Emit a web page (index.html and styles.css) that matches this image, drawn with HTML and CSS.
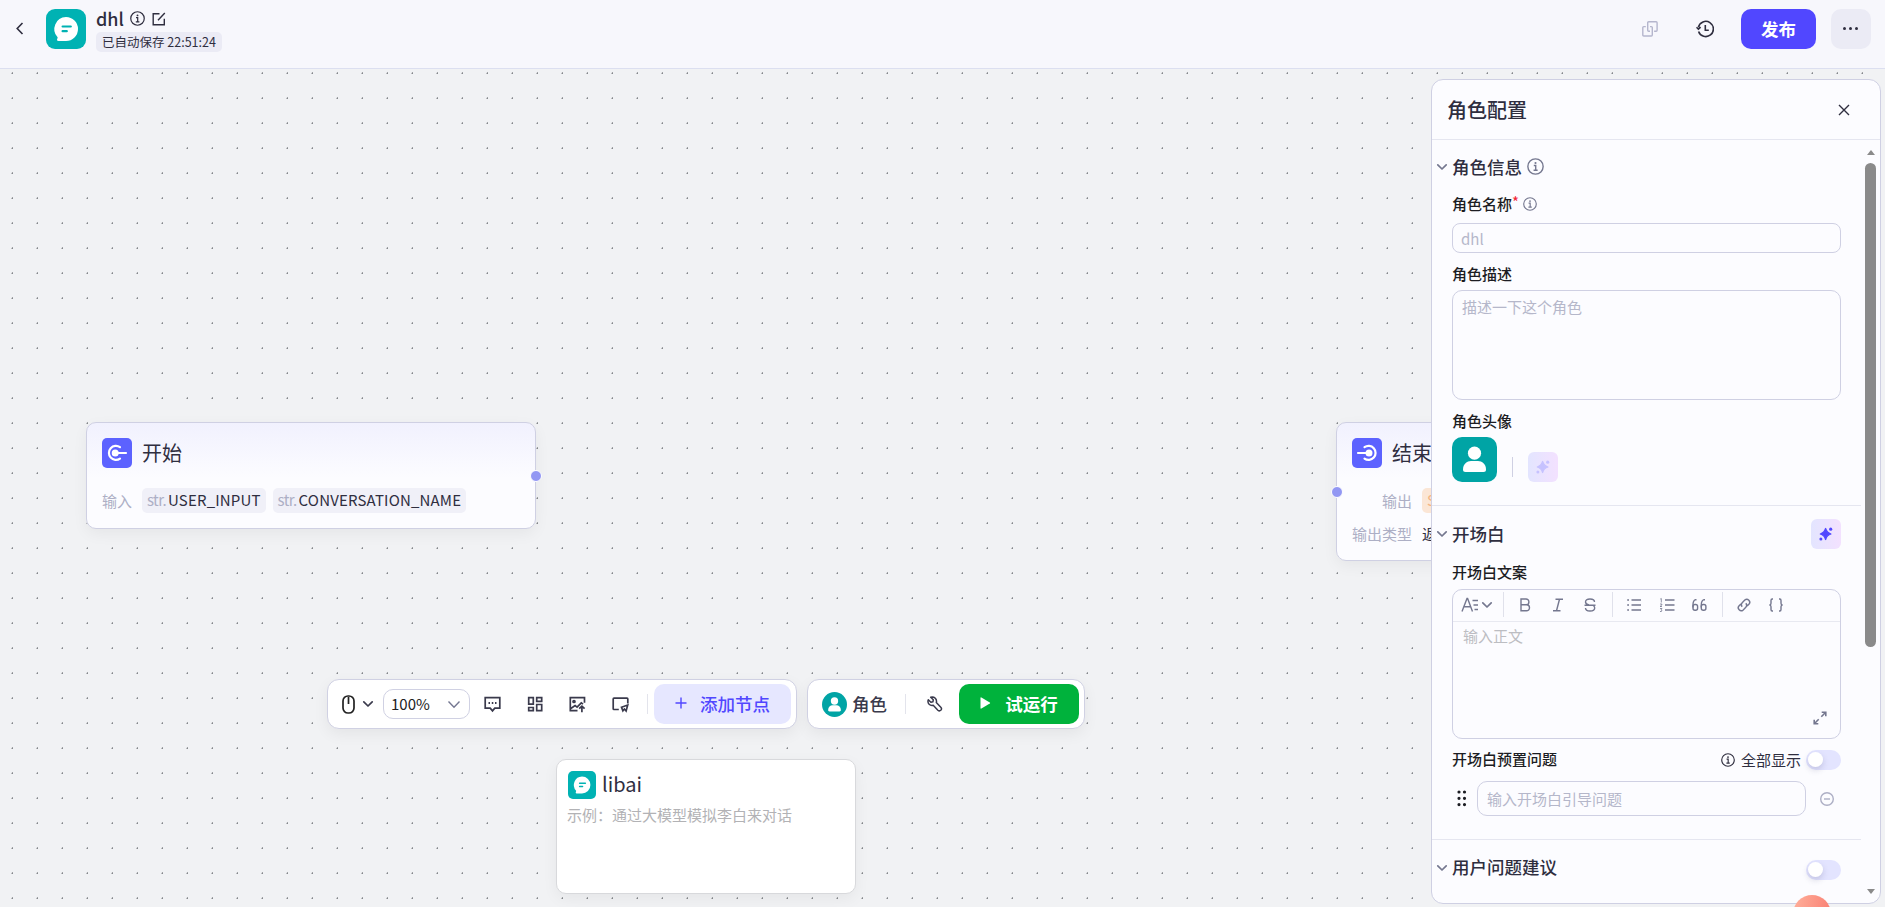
FILE: index.html
```html
<!DOCTYPE html>
<html lang="zh-CN">
<head>
    <meta charset="utf-8">
    <title>dhl</title>
    <link rel="stylesheet" href="styles.css">
</head>
<body>

<!-- shared icons -->
<svg class="sprite">
    <symbol id="i-info" viewBox="0 0 16 16">
        <circle cx="8" cy="8" r="7.2" fill="none" stroke="currentColor" stroke-width="1.3"/>
        <path d="M6.4 7h1.8v4.4M6.2 11.5h3.8" fill="none" stroke="currentColor" stroke-width="1.3"/>
        <circle cx="8" cy="4.7" r="1" fill="currentColor"/>
    </symbol>
    <symbol id="i-down" viewBox="0 0 12 12">
        <path d="M1.8 3.8L6 8l4.2-4.2" fill="none" stroke="currentColor" stroke-width="1.7" stroke-linecap="round" stroke-linejoin="round"/>
    </symbol>
    <symbol id="i-chat" viewBox="0 0 40 40">
        <path d="M20 8a12 12 0 1 1 0 24H12.5q-1.500 0-1.500-1.200c0-1 .8-1.500.6-2.600A12 12 0 0 1 20 8z" fill="#fff"/>
        <path d="M16.600 17.500h8.200M16.600 22.200h4.200" stroke="#00b2b3" stroke-width="2.200" stroke-linecap="round"/>
    </symbol>
    <symbol id="i-user" viewBox="0 0 45 45">
        <circle cx="22.500" cy="16.200" r="6.600" fill="#fff"/>
        <path d="M11 32.500c0-5.500 4-8.500 8-8.500h7c4 0 8 3 8 8.500 0 1.700-.8 2.500-2.500 2.500h-18c-1.700 0-2.500-.8-2.500-2.500z" fill="#fff"/>
    </symbol>
    <symbol id="i-spark" viewBox="0 0 14 14">
        <path d="M6.600 1.500c.8 2.700 2 4.500 5.300 5.500-3.300 1-4.500 2.800-5.300 5.500C5.800 9.800 4.600 8 1.300 7c3.300-1 4.500-2.800 5.300-5.500z" fill="currentColor" stroke="currentColor" stroke-width="1.300" stroke-linejoin="round"/>
        <circle cx="11.700" cy="2.200" r="1.600" fill="currentColor"/>
        <circle cx="1.900" cy="11.900" r="1.500" fill="currentColor"/>
    </symbol>
</svg>

<header class="header">
    <svg class="back" viewBox="0 0 8 13"><path d="M6.500 1L1.200 6.500l5.300 5.500"/></svg>
    <div class="logo"><svg><use href="#i-chat"/></svg></div>
    <div class="title">
        <div class="title-row">
            <span class="name">dhl</span>
            <svg class="info"><use href="#i-info"/></svg>
            <svg class="edit" viewBox="0 0 14 14"><path d="M7.500 1.700H1.200v11.100h11.100V6.800M12.800 1L6 8.300"/></svg>
        </div>
        <span class="saved">已自动保存 22:51:24</span>
    </div>
    <div class="actions">
        <svg class="copy" viewBox="0 0 16 16"><path d="M8 10.200H6.700q-1 0-1-1V1.800q0-1 1-1h7.400q1 0 1 1v7.400q0 1-1 1h-2M8 5.600h1.300q1 0 1 1v7.400q0 1-1 1H1.800q-1 0-1-1V6.600q0-1 1-1h2"/></svg>
        <svg class="history" viewBox="0 0 18 18"><path d="M2.600 11.400A7.600 7.600 0 1 0 2.400 7.200M.5 7.200l1.900 2 2.200-2M9.300 5v5.300h3.500"/></svg>
        <button class="publish">发布</button>
        <button class="more"><i></i><i></i><i></i></button>
    </div>
</header>

<main class="canvas">
    <div class="node node-start">
        <div class="node-head">
            <svg class="node-icon" viewBox="0 0 30 30"><path d="M18 9.200A7 7 0 1 0 18 20.600M13 15h11"/><circle cx="13.200" cy="15" r="3.500"/></svg>
            <span>开始</span>
        </div>
        <div class="node-row">
            <span class="key">输入</span>
            <span class="tag"><em>str.</em>USER_INPUT</span>
            <span class="tag"><em>str.</em>CONVERSATION_NAME</span>
        </div>
        <i class="port"></i>
    </div>

    <div class="node node-end">
        <div class="node-head">
            <svg class="node-icon" viewBox="0 0 30 30"><path d="M12.500 9.200A7 7 0 1 1 12.500 20.600M6 15h11"/><circle cx="17" cy="15" r="3.500"/></svg>
            <span>结束</span>
        </div>
        <div class="node-row">
            <span class="key">输出</span>
            <span class="tag warn">S</span>
        </div>
        <div class="node-row">
            <span class="key">输出类型</span>
            <span class="value">返</span>
        </div>
        <i class="port"></i>
    </div>

    <div class="toolbars">
        <div class="toolbar">
            <svg class="mouse" viewBox="0 0 13 19"><rect x="1" y="1" width="11" height="17" rx="5"/><path d="M6.500 2v7"/></svg>
            <svg class="caret"><use href="#i-down"/></svg>
            <div class="zoom">
                <span>100%</span>
                <svg viewBox="0 0 14 9"><path d="M1.500 1.500L7 7.200l5.500-5.700"/></svg>
            </div>
            <svg class="tool" viewBox="0 0 17 17"><path d="M1.200 1.700h14.600v10.500h-5L8.500 14.900l-2.300-2.700h-5z"/><path class="dots" d="M4.500 7h1.500M7.800 7h1.500M11 7h1.500"/></svg>
            <svg class="tool" viewBox="0 0 17 17"><path d="M1.700 1.700h4.600v6.400H1.700zM9.700 1.700h5v3.600h-5zM9.700 8.500h5v6.200h-5zM1.700 11.500h4.600v3.200H1.700z"/></svg>
            <svg class="tool" viewBox="0 0 17 17"><path d="M8.500 14.700H1.300V1.700h14.200v5M1.800 12.500l4.300-3 2 1.600 4.200-4.300 1.700 1.300M12.900 16.200V10.500M10.200 12.700l2.700-2.600 2.700 2.600"/><circle cx="5" cy="5.500" r="1"/></svg>
            <svg class="tool" viewBox="0 0 17 17"><path d="M6.800 13.500H2q-.8 0-.8-.8V3q0-.8.8-.8h13q.8 0 .8.800v4.500M9.500 11.200L15.700 9l-1.600 6-1.700-2-1.500 1.800z"/></svg>
            <i class="split"></i>
            <button class="add">
                <svg viewBox="0 0 12 12"><path d="M6 .5v11M.5 6h11"/></svg>
                添加节点
            </button>
        </div>
        <div class="toolbar toolbar-run">
            <div class="role-icon"><svg><use href="#i-user"/></svg></div>
            <span class="role">角色</span>
            <i class="split"></i>
            <svg class="wrench" viewBox="0 0 16 16"><path d="M3.700 1.300l2.600 2.500-.4 2-2 .4L1.300 3.700C.6 5.800 1 7.200 2.100 8.200c1.200 1.200 2.600 1.500 4.100 1.100l4.700 4.900c1 .9 2 .9 2.900.1.900-.9.900-2 0-3L9.300 6.600c.5-1.700.1-3.100-1-4.300C7.100 1.200 5.500.7 3.700 1.300z"/></svg>
            <button class="run">
                <svg viewBox="0 0 11 12"><path d="M.5.900v10.200q0 .8.900.4l8.400-4.900q.8-.6 0-1.200L1.400.5Q.5.100.5.900z"/></svg>
                试运行
            </button>
        </div>
    </div>

    <div class="card">
        <div class="card-head">
            <div class="logo"><svg><use href="#i-chat"/></svg></div>
            <span>libai</span>
        </div>
        <p>示例：通过大模型模拟李白来对话</p>
    </div>

    <aside class="panel">
        <div class="panel-head">
            <h2>角色配置</h2>
            <svg class="close" viewBox="0 0 12 12"><path d="M1 1l10 10M11 1L1 11"/></svg>
        </div>

        <section>
            <div class="section-head">
                <svg class="fold"><use href="#i-down"/></svg>
                <h3>角色信息</h3>
                <svg class="info"><use href="#i-info"/></svg>
            </div>
            <label class="label label-name">角色名称<b>*</b><svg class="info"><use href="#i-info"/></svg></label>
            <div class="input">dhl</div>
            <label class="label">角色描述</label>
            <div class="textarea">描述一下这个角色</div>
            <label class="label">角色头像</label>
            <div class="avatar-row">
                <div class="avatar"><svg><use href="#i-user"/></svg></div>
                <i class="split"></i>
                <button class="ai disabled"><svg><use href="#i-spark"/></svg></button>
            </div>
        </section>

        <section class="opening">
            <div class="section-head">
                <svg class="fold"><use href="#i-down"/></svg>
                <h3>开场白</h3>
                <button class="ai"><svg><use href="#i-spark"/></svg></button>
            </div>
            <label class="label">开场白文案</label>
            <div class="editor">
                <div class="editor-bar">
                    <svg class="wide" viewBox="0 0 18 16"><path d="M1 14.500L6 1.500h.6L11.500 14.500M3 9.700h6.500M11.500 3.500h5.500M12.500 8h4.500M13.500 12.500h3.500"/></svg>
                    <svg class="caret"><use href="#i-down"/></svg>
                    <i class="split"></i>
                    <svg viewBox="0 0 16 16"><path d="M4 2h5a2.900 2.900 0 0 1 0 5.800H4zM4 7.800h5.500a3 3 0 0 1 0 6H4z"/></svg>
                    <svg viewBox="0 0 16 16"><path d="M5.500 2.200H13M3 13.800h7.500M9.500 2.200l-3 11.600"/></svg>
                    <svg viewBox="0 0 16 16"><path d="M12.500 5C12.500 3 11 2 8 2S3.500 3.200 3.500 5c0 1.600 1.500 2.500 3.500 3M2.500 8.200h11M3.500 11c0 2 1.500 3 4.500 3s4.700-1.300 4.700-3c0-1-.4-1.700-1.200-2.300"/></svg>
                    <i class="split"></i>
                    <svg viewBox="0 0 16 16"><path d="M5.500 3h9.500M5.500 8h9.500M5.500 13h9.500M1.200 3h1.800M1.200 8h1.800M1.200 13h1.800"/></svg>
                    <svg viewBox="0 0 16 16"><path d="M6 3h9.500M6 8h9.500M6 13h9.500"/><path class="thin" d="M1.300 2l1-.5v4M1 7h1.800v1L1 9.500h2M1 11.500h2L2 12.800l1 .7-.6 1H1"/></svg>
                    <svg viewBox="0 0 16 16"><path d="M5.500 2.700H4.500Q2 3.500 2 8v2.500M14 2.700h-1Q10.300 3.500 10.300 8v2.500"/><rect x="2" y="7.500" width="4.600" height="5.800" rx="2"/><rect x="10.300" y="7.500" width="4.600" height="5.800" rx="2"/></svg>
                    <i class="split"></i>
                    <svg viewBox="0 0 16 16"><path d="M6.200 9.800a3 3 0 0 1 0-4.100l2.600-2.600a2.900 2.900 0 0 1 4.100 4.100l-1.800 1.800M9.800 6.200a3 3 0 0 1 0 4.100l-2.600 2.600a2.900 2.900 0 0 1-4.100-4.100l1.800-1.800"/></svg>
                    <svg viewBox="0 0 16 16"><path d="M5 2H4.200Q3 2 3 3.500v2.700Q3 7.700 1.500 8 3 8.300 3 9.800v2.700Q3 14 4.200 14H5M11 2h.8Q13 2 13 3.500v2.700q0 1.500 1.500 1.800-1.500.3-1.500 1.800v2.700q0 1.500-1.200 1.500H11"/></svg>
                </div>
                <div class="editor-body">
                    <span>输入正文</span>
                    <svg viewBox="0 0 14 14"><path d="M8.700 1.200h4.100v4.100M12.500 1.500L8.300 5.700M5.300 12.800H1.200V8.700M1.500 12.500l4.200-4.200"/></svg>
                </div>
            </div>
            <div class="preset-head">
                <label class="label">开场白预置问题</label>
                <svg class="info"><use href="#i-info"/></svg>
                <span class="show-all">全部显示</span>
                <i class="switch"></i>
            </div>
            <div class="preset-row">
                <svg class="drag" viewBox="0 0 10 17"><path d="M2 2v.01M7.500 2v.01M2 8.300v.01M7.500 8.300v.01M2 14.600v.01M7.500 14.600v.01"/></svg>
                <div class="question">输入开场白引导问题</div>
                <svg class="minus" viewBox="0 0 14 14"><circle cx="7" cy="7" r="6.300"/><path d="M4 7h6"/></svg>
            </div>
        </section>

        <section class="suggest">
            <div class="section-head">
                <svg class="fold"><use href="#i-down"/></svg>
                <h3>用户问题建议</h3>
                <i class="switch"></i>
            </div>
        </section>

        <div class="scrollbar"><i class="up"></i><i class="thumb"></i><i class="down"></i></div>
    </aside>

    <div class="bubble"></div>
</main>

</body>
</html>
```
FILE: styles.css
```css
* {
    box-sizing: border-box;
}
body {
    margin: 0;
    height: 907px;
    overflow: hidden;
    display: flex;
    flex-direction: column;
    font-family: "Noto Sans CJK SC", "Noto Sans", sans-serif;
    font-size: 15px;
    color: #2f2e3f;
}
svg {
    display: block;
    flex: none;
    fill: none;
    stroke: currentColor;
    stroke-width: 1.4;
}
symbol, use {
    stroke: none;
}
i, em {
    font-style: normal;
}
h2, h3, p {
    margin: 0;
    font-weight: 500;
}
button {
    border: 0;
    padding: 0;
    font: inherit;
    display: flex;
    align-items: center;
    justify-content: center;
}
.sprite {
    position: absolute;
    width: 0;
    height: 0;
}

/* header */
.header {
    height: 69px;
    flex: none;
    display: flex;
    align-items: flex-start;
    padding: 9px 14px 0 16px;
    background: #f7f7fc;
    border-bottom: 1px solid #dcdff0;
}
.back {
    width: 8px;
    height: 13px;
    margin: 13px 22px 0 0;
    stroke-width: 1.6;
}
.logo {
    width: 40px;
    height: 40px;
    border-radius: 9px;
    background: #00b2b3;
}
.logo svg {
    width: 100%;
    height: 100%;
}
.title {
    margin-left: 10px;
}
.title-row {
    display: flex;
    align-items: center;
    height: 23px;
    margin-top: -1px;
}
.name {
    margin-top: -3px;
    font-size: 18px;
    line-height: 22px;
    font-weight: 500;
}
.title-row .info {
    width: 15px;
    height: 15px;
    margin: -2px 7px 0 6px;
}
.edit {
    width: 14px;
    height: 14px;
    margin-top: -2px;
}
.saved {
    display: block;
    height: 20px;
    margin-top: 1px;
    padding: 0 6px;
    border-radius: 5px;
    background: #ebebf5;
    font-size: 12.5px;
    line-height: 19px;
}
.actions {
    margin-left: auto;
    display: flex;
    align-items: center;
}
.copy {
    width: 16px;
    height: 16px;
    margin-right: 38px;
    color: #b5b6cd;
}
.history {
    width: 18px;
    height: 18px;
    margin-right: 27px;
    stroke-width: 1.6;
}
.publish {
    width: 75px;
    height: 40px;
    margin-right: 15px;
    padding-bottom: 2px;
    border-radius: 10px;
    background: #5147ff;
    color: #fff;
    font-size: 17.5px;
    font-weight: 700;
}
.more {
    width: 40px;
    height: 40px;
    padding: 0 2px 2px 0;
    gap: 3px;
    border-radius: 10px;
    background: #ebebf5;
}
.more i {
    width: 3px;
    height: 3px;
    border-radius: 50%;
    background: #2f2e3f;
}

/* canvas */
.canvas {
    position: relative;
    flex: 1;
    overflow: hidden;
    background: #f1f2f4 radial-gradient(circle at 12.3px 4.2px, #85888c .6px, transparent 1.1px) 0 0 / 25px 25px;
}
.node {
    position: absolute;
    top: 353px;
    width: 450px;
    padding: 15px;
    border: 1px solid #cfd0e3;
    border-radius: 10px;
    background: linear-gradient(#f1f1fe, #fcfcff 55px);
    box-shadow: 0 5px 15px rgba(0, 0, 0, .05);
}
.node-start {
    left: 86px;
    height: 107px;
}
.node-end {
    left: 1336px;
    height: 139px;
}
.node-head {
    display: flex;
    align-items: center;
    height: 30px;
    gap: 10px;
    margin-bottom: 20px;
    font-size: 20px;
}
.node-head span {
    margin-top: -1px;
}
.node-icon {
    width: 30px;
    height: 30px;
    border-radius: 5px;
    background: #5c62ff;
    color: #fff;
    stroke-width: 2.2;
    stroke-linecap: round;
}
.node-icon circle {
    fill: #fff;
    stroke: none;
}
.node-row {
    display: flex;
    align-items: center;
    height: 25px;
    margin-bottom: 8px;
}
.key {
    margin: -1px 10px 0 0;
    color: #adafc5;
}
.node-end .key {
    width: 60px;
    text-align: right;
}
.tag {
    height: 25px;
    line-height: 24px;
    margin-right: 7px;
    padding: 0 5px;
    border-radius: 5px;
    background: #f0f0f8;
    letter-spacing: .17px;
}
.tag em {
    color: #adafc5;
    margin-right: 2px;
    letter-spacing: -.6px;
}
.tag.warn {
    background: #fbe6d6;
    color: #f5b583;
}
.port {
    position: absolute;
    width: 12px;
    height: 12px;
    border: 1px solid #fff;
    border-radius: 50%;
    background: #9297f3;
}
.node-start .port {
    right: -7px;
    top: 47px;
}
.node-end .port {
    left: -6px;
    top: 63px;
}

/* bottom toolbars */
.toolbars {
    position: absolute;
    left: 327px;
    top: 610px;
    display: flex;
    gap: 10px;
}
.toolbar {
    display: flex;
    align-items: center;
    height: 50px;
    padding: 0 5px 0 14px;
    border: 1px solid #d0d1e3;
    border-radius: 12px;
    background: #fff;
    box-shadow: 0 5px 15px rgba(0, 0, 0, .06);
    color: #3a3a4c;
}
.mouse {
    width: 13px;
    height: 19px;
    stroke-width: 1.7;
    color: #222;
}
.toolbar .caret {
    width: 12px;
    height: 12px;
    margin: 0 9px 0 7px;
}
.zoom {
    display: flex;
    align-items: center;
    justify-content: space-between;
    width: 87px;
    height: 30px;
    margin-right: 14px;
    padding: 0 8px;
    border: 1px solid #d0d1e3;
    border-radius: 10px;
    color: #222;
}
.zoom span {
    margin: -2px 0 0 -1px;
}
.zoom svg {
    width: 14px;
    height: 9px;
    color: #747791;
}
.tool {
    width: 17px;
    height: 17px;
    margin-right: 25.500px;
    stroke-width: 1.7;
}
.dots {
    stroke-width: 1.8;
}
.toolbar .split {
    width: 1px;
    height: 20px;
    margin-left: -7px;
    background: #e3e4ec;
}
.add {
    width: 137px;
    height: 40px;
    margin-left: 6px;
    padding-bottom: 2px;
    gap: 13px;
    border-radius: 10px;
    background: #e6e7ff;
    color: #5147ff;
    font-size: 17.5px;
    font-weight: 500;
}
.add svg {
    width: 12px;
    height: 12px;
}
.role-icon {
    width: 25px;
    height: 25px;
    border-radius: 50%;
    background: #00a4a5;
}
.role-icon svg {
    width: 25px;
    height: 25px;
}
.role {
    margin: -2px 25px 0 5px;
    font-size: 17.5px;
    font-weight: 500;
}
.wrench {
    width: 16px;
    height: 16px;
    margin: 0 16px 0 21px;
    stroke-width: 1.5;
    stroke-linejoin: round;
}
.run {
    width: 120px;
    height: 40px;
    padding-bottom: 2px;
    gap: 14px;
    border-radius: 10px;
    background: #00b23c;
    color: #fff;
    font-size: 17.5px;
    font-weight: 700;
}
.run svg {
    width: 11px;
    height: 12px;
    fill: #fff;
    stroke: none;
}

/* example card */
.card {
    position: absolute;
    left: 556px;
    top: 690px;
    width: 300px;
    height: 135px;
    padding: 10px;
    border: 1px solid #d8d9dc;
    border-radius: 10px;
    background: #fff;
    box-shadow: 0 5px 15px rgba(0, 0, 0, .05);
}
.card-head {
    display: flex;
    align-items: center;
    gap: 6px;
    height: 29px;
    margin-left: 1px;
    font-size: 20px;
}
.card-head span {
    margin-top: -3px;
}
.card .logo {
    width: 28px;
    height: 28px;
    border-radius: 5px;
}
.card p {
    margin-top: 5px;
    line-height: 22px;
    font-weight: 400;
    color: #b2b2b5;
}

/* role panel */
.panel {
    position: absolute;
    left: 1431px;
    top: 10px;
    width: 450px;
    height: 825px;
    border: 1px solid #cfd0e3;
    border-radius: 12px;
    background: #fcfcff;
}
.panel-head {
    display: flex;
    align-items: center;
    justify-content: space-between;
    height: 60px;
    padding: 0 30px 0 15px;
    border-bottom: 1px solid #e5e6f0;
}
.panel-head h2 {
    font-size: 20px;
}
.close {
    width: 12px;
    height: 12px;
}
.panel section {
    width: 429px;
    padding: 14px 20px 23px;
    border-bottom: 1px solid #e5e6f0;
}
.panel .opening {
    padding-top: 13px;
}
.panel .suggest {
    padding: 15px 20px 0;
    border: 0;
}
.section-head {
    display: flex;
    align-items: center;
    height: 26px;
    margin-bottom: 12px;
}
.opening .section-head {
    height: 30px;
}
.section-head h3 {
    margin-top: -2px;
    font-size: 17.5px;
}
.section-head .info {
    width: 17px;
    height: 17px;
    margin: -1px 0 0 5px;
}
.panel .info {
    color: #74778f;
}
.fold {
    width: 12px;
    height: 12px;
    margin: 0 4px 0 -16px;
    color: #74778f;
}
.section-head .ai, .section-head .switch {
    margin-left: auto;
}
.label {
    display: flex;
    align-items: center;
    height: 24px;
    margin-bottom: 3px;
    padding-bottom: 3px;
    font-weight: 500;
    color: #1c1d23;
}
.label b {
    margin: -3px 4px 0 0;
    font-weight: 400;
    color: #f22435;
}
.label .info {
    width: 14px;
    height: 14px;
    margin-top: 1px;
}
.label-name {
    margin-bottom: 7px;
    padding-bottom: 2px;
}
.input, .textarea {
    height: 30px;
    margin-bottom: 10px;
    padding: 0 8px;
    border: 1px solid #cfd0e3;
    border-radius: 8px;
    line-height: 30px;
    color: #b5b7ca;
}
.textarea {
    height: 110px;
    padding: 5px 9px;
    border-radius: 10px;
    line-height: 22px;
}
.avatar-row {
    display: flex;
    align-items: flex-end;
}
.avatar {
    width: 45px;
    height: 45px;
    border-radius: 10px;
    background: #00a4a5;
}
.avatar svg {
    width: 45px;
    height: 45px;
}
.avatar-row .split {
    width: 1px;
    height: 20px;
    margin: 0 15px 5px;
    background: #cfd0e3;
}
.ai {
    width: 30px;
    height: 30px;
    border-radius: 6px;
    background: linear-gradient(90deg, #e3e5ff, #f3e1ff);
    color: #5147ff;
}
.ai.disabled {
    color: #c6c2ff;
}
.ai svg {
    width: 14px;
    height: 14px;
}
.editor {
    height: 150px;
    margin: 4px 0 11px;
    border: 1px solid #cfd0e3;
    border-radius: 10px;
}
.editor-bar {
    display: flex;
    align-items: center;
    height: 32px;
    padding: 0 0 2px 8px;
    border-bottom: 1px solid #e8e9f1;
    color: #74778f;
}
.editor-bar svg {
    width: 16px;
    height: 16px;
    margin-right: 16.600px;
}
.editor-bar .wide {
    width: 18px;
    margin: 0 2px 0 0;
}
.editor-bar .caret {
    width: 12px;
    height: 12px;
    margin-right: 10px;
}
.editor-bar .split {
    width: 1px;
    height: 25px;
    margin-right: 13px;
    background: #e0e1eb;
}
.editor-bar svg + .split:not(.caret + .split) {
    margin-left: -2.500px;
}
.thin {
    stroke-width: .8;
}
.editor-body {
    display: flex;
    flex-direction: column;
    justify-content: space-between;
    height: 116px;
    padding: 3px 13px 13px 10px;
    color: #bcbdc2;
}
.editor-body svg {
    width: 14px;
    height: 14px;
    align-self: flex-end;
    stroke-width: 1.6;
    color: #74778f;
}
.preset-head {
    display: flex;
    align-items: center;
    height: 20px;
    margin-bottom: 11px;
}
.preset-head .label {
    margin: 0 auto 0 0;
}
.preset-head .info {
    width: 14px;
    height: 14px;
    margin-right: 6px;
    color: #2f2e3f;
}
.show-all {
    margin-top: -2px;
}
.switch {
    width: 35px;
    height: 20px;
    margin-left: 5px;
    padding: 2px;
    border-radius: 10px;
    background: #e3e4ff;
}
.switch::before {
    content: "";
    display: block;
    width: 15px;
    height: 15px;
    border-radius: 50%;
    background: #fff;
    box-shadow: 0 3px 6px rgba(60, 60, 110, .2);
}
.suggest .switch {
    margin-top: 4px;
}
.suggest h3 {
    margin-top: -4px;
}
.preset-row {
    display: flex;
    align-items: center;
    padding: 0 7px 0 5px;
}
.drag {
    width: 10px;
    height: 17px;
    margin-right: 10px;
    color: #1c1d23;
    stroke-width: 3.2;
    stroke-linecap: round;
}
.question {
    flex: 1;
    height: 35px;
    margin-right: 14px;
    padding-left: 9px;
    border: 1px solid #cfd0e3;
    border-radius: 10px;
    line-height: 34px;
    color: #b5b7ca;
}
.minus {
    width: 14px;
    height: 14px;
    color: #adafc5;
}
.scrollbar {
    position: absolute;
    top: 70px;
    right: 4px;
    bottom: 9px;
    width: 11px;
    display: flex;
    flex-direction: column;
    align-items: center;
}
.up, .down {
    border: 4.5px solid transparent;
    border-top: 0;
    border-bottom: 5px solid #8a8a8a;
}
.down {
    margin-top: auto;
    border-top: 5px solid #8a8a8a;
    border-bottom: 0;
}
.thumb {
    width: 11px;
    height: 484px;
    margin-top: 8px;
    border-radius: 6px;
    background: #8a8a8a;
}
.bubble {
    position: absolute;
    left: 1793px;
    top: 826px;
    width: 38px;
    height: 38px;
    border-radius: 50%;
    background: linear-gradient(100deg, #ffb09b, #f97c70);
}
```
